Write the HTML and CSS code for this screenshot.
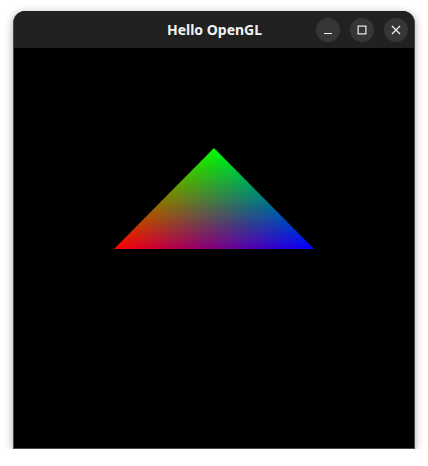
FILE: index.html
```html
<!DOCTYPE html>
<html>
<head>
<meta charset="utf-8">
<link rel="stylesheet" href="styles.css">
</head>
<body>
<div class="window">
  <div class="titlebar">
    <div class="title">Hello OpenGL</div>
    <div class="controls">
      <div class="btn">
        <svg width="10" height="10" viewBox="0 0 10 10"><path d="M1 8.5H9" stroke="#eeeeee" stroke-width="1.2" fill="none"/></svg>
      </div>
      <div class="btn">
        <svg width="10" height="10" viewBox="0 0 10 10"><rect x="1.1" y="1.1" width="7.8" height="7.8" stroke="#eeeeee" stroke-width="1.2" fill="none"/></svg>
      </div>
      <div class="btn">
        <svg width="10" height="10" viewBox="0 0 10 10"><path d="M1 1L9 9M9 1L1 9" stroke="#eeeeee" stroke-width="1.3" fill="none"/></svg>
      </div>
    </div>
  </div>
  <div class="viewport">
    <svg class="scene" width="400" height="400" viewBox="0 0 400 400">
      <defs>
        <linearGradient id="gr" gradientUnits="userSpaceOnUse" x1="100" y1="200" x2="200" y2="100">
          <stop offset="0" stop-color="#ff0000"/>
          <stop offset="1" stop-color="#000000"/>
        </linearGradient>
        <linearGradient id="gg" gradientUnits="userSpaceOnUse" x1="200" y1="100" x2="200" y2="200">
          <stop offset="0" stop-color="#00ff00"/>
          <stop offset="1" stop-color="#000000"/>
        </linearGradient>
        <linearGradient id="gb" gradientUnits="userSpaceOnUse" x1="300" y1="200" x2="200" y2="100">
          <stop offset="0" stop-color="#0000ff"/>
          <stop offset="1" stop-color="#000000"/>
        </linearGradient>
      </defs>
      <polygon class="layer" points="100,201 300,201 200,100" fill="url(#gr)"/>
      <polygon class="layer" points="100,201 300,201 200,100" fill="url(#gg)"/>
      <polygon class="layer" points="100,201 300,201 200,100" fill="url(#gb)"/>
    </svg>
  </div>
</div>
</body>
</html>
```

FILE: styles.css
```css
html, body {
  margin: 0;
  padding: 0;
  background: #ffffff;
}
body {
  padding: 11px 0 0 13px;
}
.window {
  width: 400px;
  border: 1px solid #4a4a4a;
  border-top: none;
  border-radius: 12px 12px 0 0;
  background: #202020;
  box-shadow: 0 2px 9px rgba(0, 0, 0, 0.35);
  overflow: hidden;
}
.titlebar {
  height: 37px;
  background: #212121;
  display: flex;
  align-items: center;
  justify-content: center;
  position: relative;
}
.title {
  font-family: "Noto Sans", "DejaVu Sans", sans-serif;
  font-weight: 700;
  font-size: 14px;
  color: #f2f2f2;
  margin-left: 1px;
}
.controls {
  position: absolute;
  right: 6px;
  top: 7px;
  display: flex;
  gap: 10px;
}
.btn {
  width: 24px;
  height: 24px;
  border-radius: 50%;
  background: #363636;
  display: flex;
  align-items: center;
  justify-content: center;
}
.viewport {
  height: 400px;
  background: #000000;
}
.scene {
  display: block;
  isolation: isolate;
}
.layer {
  mix-blend-mode: screen;
}
```
